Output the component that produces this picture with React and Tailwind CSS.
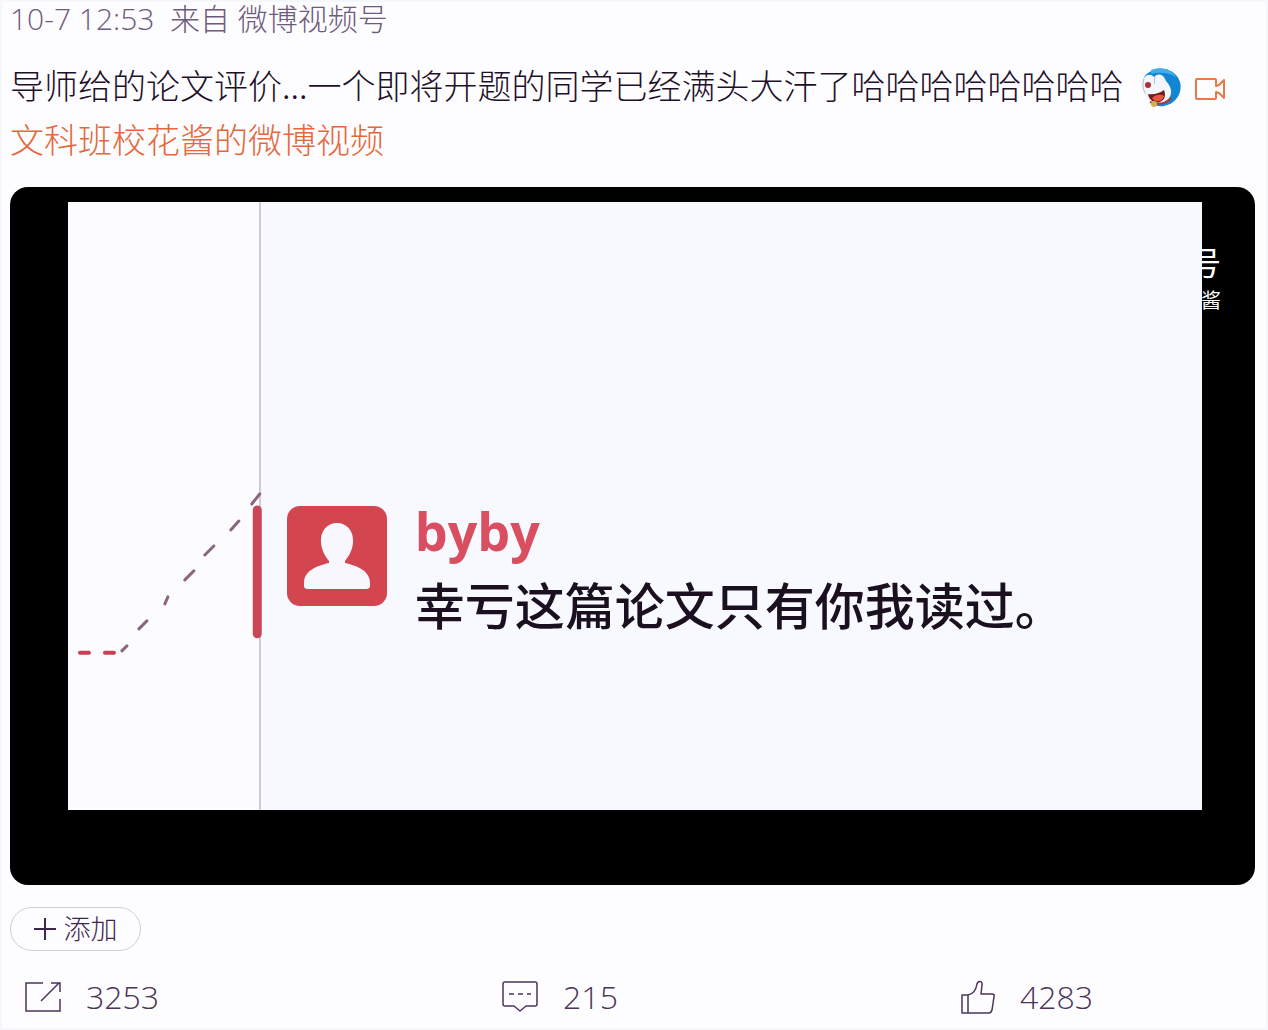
function EmojiFace() {
  return (
    <svg viewBox="0 0 42 42" className="inline-block h-[42px] w-[42px] ml-4 mr-2 align-[-10px]" role="img" aria-label="笑">
      <path d="M8 6C18-2 36 1 40 15c3 12-5 22-16 24-6 1-10-1-11-3L3 15C3 11 5 8 8 6Z" fill="#1286d2" />
      <path d="M11 3C21-1 32 2 36 10 28 5 19 5 11 7Z" fill="#41aee8" />
      <path d="M3 13c2-5 7-7 11-3 4-4 9-3 11 2 1 3 5 5 6 11 1 7-4 13-12 14-9 1-13-4-14-10C2 22 1 17 3 13Z" fill="#f3f6fb" />
      <path d="M15 10c-1 3-1 5 0 7M4 12c-2 6-1 11 2 15" fill="none" stroke="#a9bacb" strokeWidth="1" />
      <circle cx="8" cy="18" r="3" fill="#b62c3f" />
      <path d="M8 27c6 1 12-1 16-4 2 5 1 10-4 12-6 2-11-2-12-8Z" fill="#701d1d" />
      <path d="M12 31c4-4 9-4 12-2-1 5-8 8-12 2Z" fill="#e55843" />
      <path d="M10 35c7 3 15 2 21-4" fill="none" stroke="#b92e30" strokeWidth="2" />
      <circle cx="14" cy="37" r="3" fill="#d8b144" />
    </svg>
  );
}

function CameraIcon() {
  return (
    <svg viewBox="0 0 32 26" className="inline-block h-[26px] w-8 mx-1 align-[-3px]" fill="none" stroke="#ea7a45" strokeWidth="2" strokeLinejoin="round" aria-hidden="true">
      <path d="M3 3h18q1 0 1 1v6l3-1 5-5v18l-5-5-3-1v6q0 1-1 1H3q-1 0-1-1V4q0-1 1-1Z" />
    </svg>
  );
}

function ShareIcon() {
  return (
    <svg viewBox="0 0 38 32" className="h-8 w-[38px]" fill="none" stroke="#4b3458" strokeWidth="1.5" aria-hidden="true">
      <path d="M19 2H2v28h34V18M17 20 35 2M27 2h9v9" />
    </svg>
  );
}

function CommentIcon() {
  return (
    <svg viewBox="0 0 38 32" className="h-8 w-[38px]" fill="none" stroke="#4b3458" strokeWidth="1.5" strokeLinejoin="round" aria-hidden="true">
      <path d="M4 1h30q2 0 2 2v20q0 2-2 2h-9l-6 5-6-5H4q-2 0-2-2V3q0-2 2-2Z" />
      <path d="M8 13h5M17 13h5M26 13h4" />
    </svg>
  );
}

function LikeIcon() {
  return (
    <svg viewBox="0 0 36 34" className="h-[34px] w-9" fill="none" stroke="#4b3458" strokeWidth="1.5" strokeLinejoin="round" aria-hidden="true">
      <path d="M2 15h6c6-1 8-5 9-11 1-4 6-3 5 1l-1 9h11q3 0 2 3l-2 13q-1 3-3 3H2ZM8 15v18" />
    </svg>
  );
}

const actions = [
  { label: '转发', count: 3253, Icon: ShareIcon },
  { label: '评论', count: 215, Icon: CommentIcon },
  { label: '赞', count: 4283, Icon: LikeIcon },
];

function VideoCard() {
  return (
    <div className="relative mt-[21px] rounded-[18px] bg-black pt-[15px] pr-[53px] pb-[75px] pl-[58px]">
      {/* account watermark, partly hidden by the frame */}
      <div className="absolute top-[56px] right-[34px] text-right font-normal text-white">
        <p className="text-[32px] leading-[40px]">号</p>
        <p className="text-[20px] leading-[36px]">酱</p>
      </div>

      <div className="relative flex aspect-[1134/608] bg-[#fcfcff]">
        <div className="w-[17%] shrink-0 border-r-2 border-[#d0ccd5]">
          <svg viewBox="0 0 191 608" className="relative z-10 h-full w-full overflow-visible" fill="none" strokeLinecap="round" aria-hidden="true">
            <path d="M12 451h9M37 451h9" stroke="#c83f54" strokeWidth="4" />
            <path d="M54 449l5-5M71 427l8-8M97 402l3-7M117 378l9-9M137 353l9-9M163 328l8-9M184 302l8-10" stroke="#8c647c" strokeWidth="3" />
            <path d="M189.500 308v124" stroke="#c94656" strokeWidth="9" />
          </svg>
        </div>
        <div className="grid flex-1 grid-rows-2 bg-[#f8f9fe] pl-[26px]">
          <div className="row-start-2 flex items-start gap-7">
            <svg viewBox="0 0 100 100" className="h-[100px] w-[100px] shrink-0" role="img" aria-label="byby">
              <rect width="100" height="100" rx="13" fill="#d4464f" />
              <path d="M50 17c10 0 17 8 16 20-1 9-5 14-8 18v2c13 3 25 8 25 20v3q0 3-4 3H21q-4 0-4-3v-3c0-12 12-17 25-20v-2c-3-4-7-9-8-18-1-12 6-20 16-20Z" fill="#f8f7fd" />
            </svg>
            <div>
              <p className="font-['Open_Sans'] text-[52px] leading-[50px] font-bold text-[#d94f61]">byby</p>
              <p className="text-[50px] leading-[100px] font-medium text-[#1a1020]">幸亏这篇论文只有你我读过。</p>
            </div>
          </div>
        </div>
      </div>
    </div>
  );
}

export default function App() {
  return (
    <article className="border-2 border-[#f6f7fa] bg-[#fdfdff] pr-[11px] pl-2 font-['Open_Sans','Noto_Sans_CJK_SC',sans-serif] font-light text-[#1d1029]">
      <p className="text-[30px] leading-[34px] text-[#6d5a7c]">
        10-7 12:53 &nbsp;来自 <a href="#source">微博视频号</a>
      </p>

      <p className="mt-[22px] font-['Noto_Sans_CJK_SC',sans-serif] text-[34px] leading-[54px]">
        导师给的论文评价...一个即将开题的同学已经满头大汗了哈哈哈哈哈哈哈哈
        <EmojiFace />
        <CameraIcon />{' '}
        <a href="#video" className="inline-block text-[#e4683c]">文科班校花酱的微博视频</a>
      </p>

      <VideoCard />

      <button type="button" className="mt-[22px] flex h-11 w-[131px] items-center justify-center gap-2 rounded-full border border-[#d0ced6] text-[27px] leading-[38px] text-[#3d2650]">
        <svg viewBox="0 0 22 22" className="h-[22px] w-[22px]" fill="none" stroke="#3d2650" strokeWidth="2" aria-hidden="true">
          <path d="M11 0v22M0 11h22" />
        </svg>
        添加
      </button>

      <div className="mt-[26px] mb-[11px] flex justify-between pr-[162px] pl-[14px]">
        {actions.map(({ label, count, Icon }) => (
          <button key={label} type="button" aria-label={`${label} ${count}`} className="flex items-center gap-6 text-[32px] leading-[40px] text-[#4b3458]">
            <Icon />
            {count}
          </button>
        ))}
      </div>
    </article>
  );
}
